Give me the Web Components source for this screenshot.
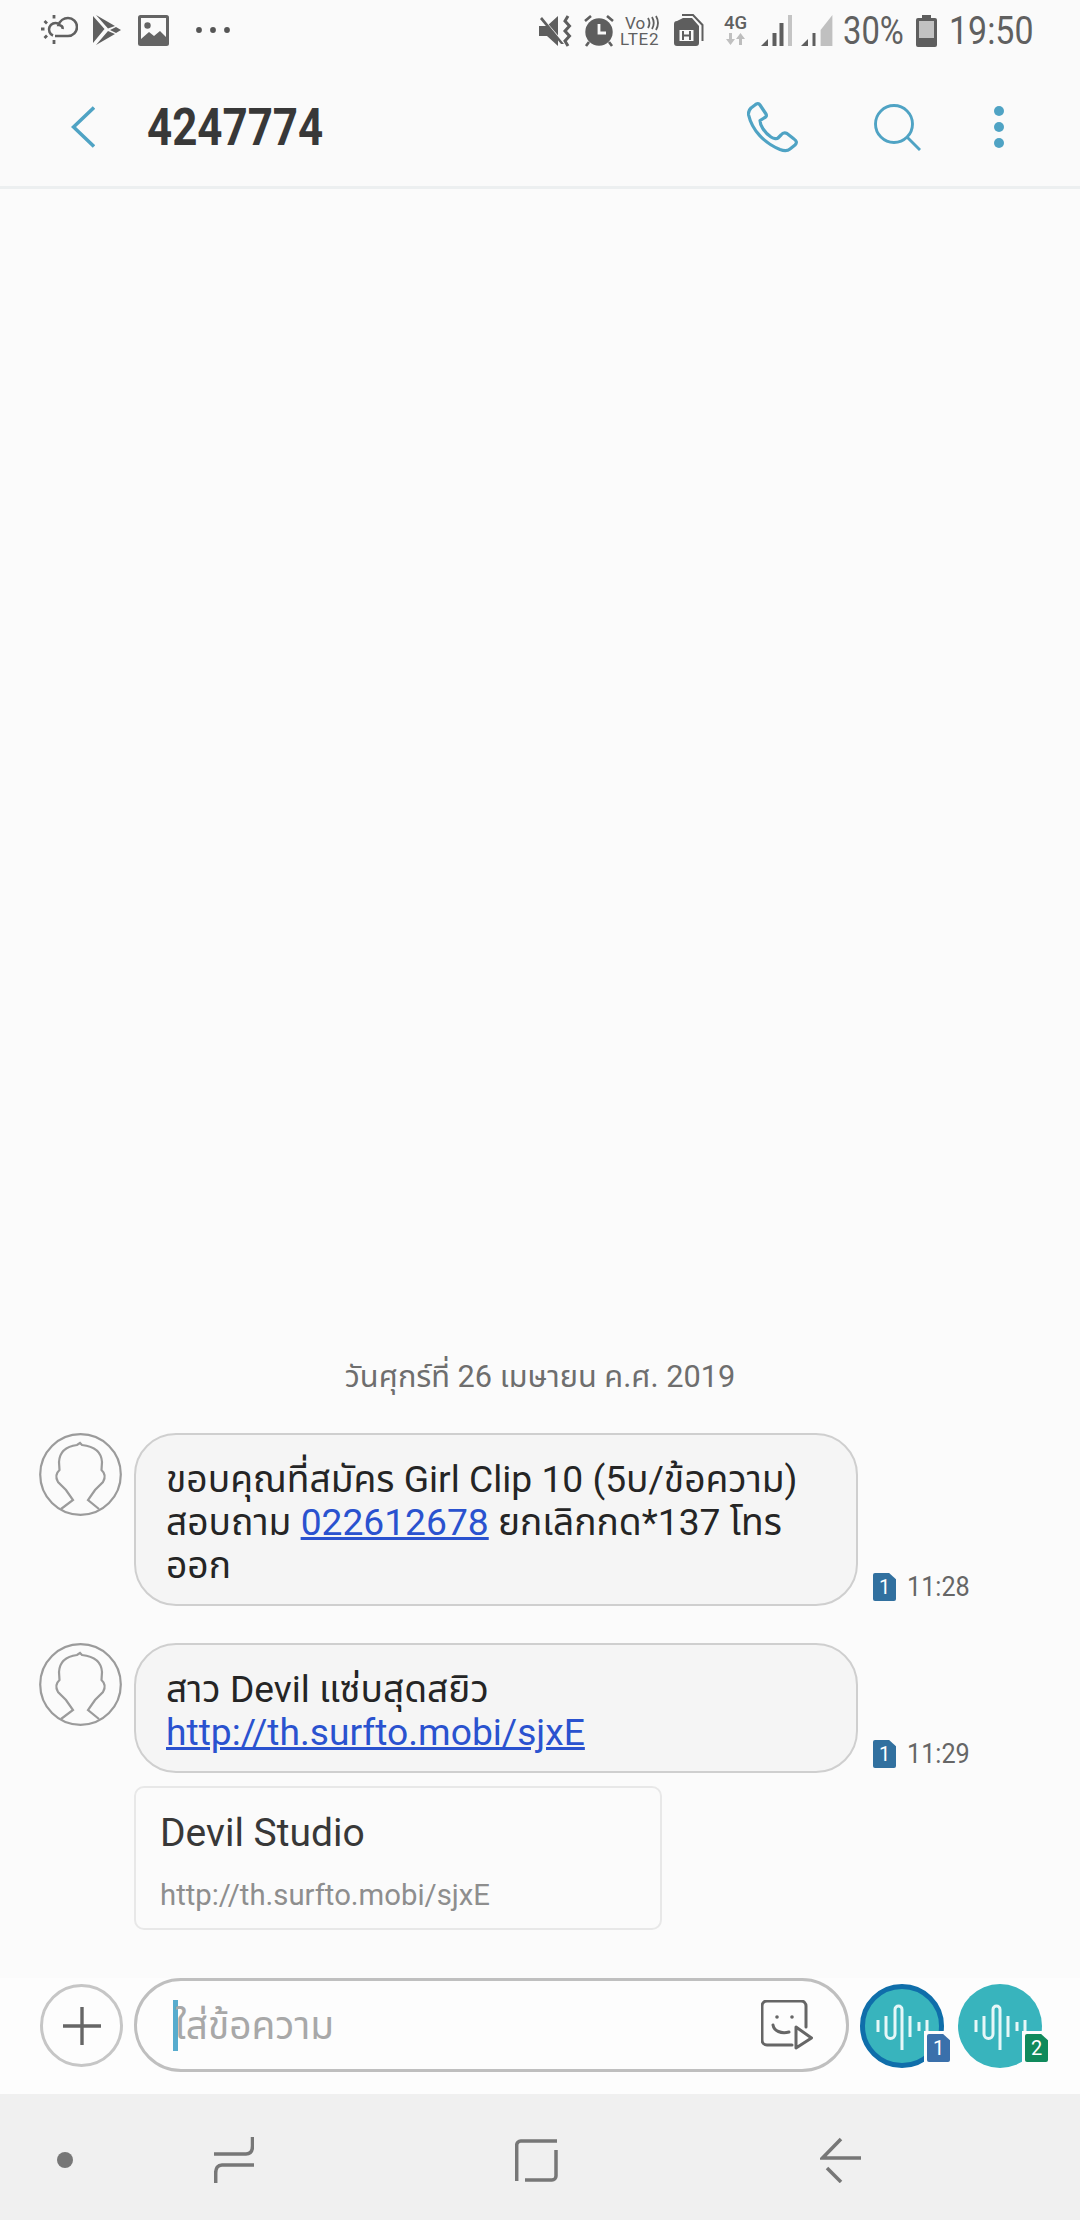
<!DOCTYPE html>
<html lang="th">
<head>
<meta charset="utf-8">
<title>4247774</title>
<style>
  html, body { margin: 0; height: 100%; }
  body {
    width: 1080px; height: 2220px;
    display: flex; flex-direction: column;
    background: #fbfbfb;
    font-family: Roboto, "Noto Sans Thai", "Noto Sans", sans-serif;
    overflow: hidden;
  }
</style>
</head>
<body>
  <status-bar></status-bar>
  <thread-header number="4247774"></thread-header>

  <message-list date="วันศุกร์ที่ 26 เมษายน ค.ศ. 2019">
    <message-row time="11:28">ขอบคุณที่สมัคร Girl Clip 10 (5บ/ข้อความ) สอบถาม <a href="#">022612678</a> ยกเลิกกด*137 โทร ออก</message-row>
    <message-row time="11:29">สาว Devil แซ่บสุดสยิว<br><a href="#">http://th.surfto.mobi/sjxE</a></message-row>
    <link-card title="Devil Studio" url="http://th.surfto.mobi/sjxE"></link-card>
  </message-list>

  <message-composer placeholder="ใส่ข้อความ"></message-composer>
  <nav-bar></nav-bar>

<script>
/* 1 ▸ status bar */
class StatusBar extends HTMLElement {
  constructor() {
    super();
    this.attachShadow({ mode: 'open' }).innerHTML = `
      <style>
        :host { display: flex; align-items: flex-start; height: 66px; padding: 15px 49px 0 41px; box-sizing: border-box; background: #fafafa; color: #606060; flex: none; }
        svg { display: block; flex: none; }
        .left, .right { display: flex; align-items: flex-start; }
        .right { margin-left: auto; }
        .txt { font-size: 39px; line-height: 32px; height: 32px; white-space: nowrap; transform: scaleX(.84); transform-origin: left center; }
        .volte { width: 42px; height: 32px; margin-left: 6px; display: flex; flex-direction: column; flex: none; }
        .vo { display: flex; align-items: center; height: 16px; padding-left: 5px; font-size: 17px; line-height: 16px; }
        .lte { height: 16px; font-size: 17px; line-height: 17px; letter-spacing: .8px; white-space: nowrap; }
        .net { width: 25px; height: 32px; margin-left: 20px; display: flex; flex-direction: column; flex: none; }
        .g4 { height: 17px; font-size: 18.5px; font-weight: 500; line-height: 17px; white-space: nowrap; }
      </style>
      <div class="left">
        <svg width="37" height="30" viewBox="0 0 37 30" fill="none" stroke="#606060" stroke-width="2.600">
          <path d="M14 21 H27 a9 9 0 0 0 0-18 a10 10 0 0 0-9.500 7 c3 0 4.500 2 4 4"/>
          <path d="M17 8.500 a6.500 6.500 0 1 0-5 12"/>
          <path d="M13 0v3.500M0 14h3.500M3.500 6l2.500 2.500M3.500 23l2.500-2.500M13 25v4" stroke-width="2.800"/>
        </svg>
        <svg style="margin-left:15px" width="28" height="30" viewBox="0 0 28 30" fill="#606060">
          <path d="M0 1 L11.500 14 L0 28Z M3 0 L22 11 L15 13.500Z M15 16 L22 19 L3 30Z M17 15 L23 12 L28 15 L23 18Z"/>
        </svg>
        <svg style="margin-left:17px" width="31" height="31" viewBox="0 0 31 31">
          <rect width="31" height="31" rx="2.500" fill="#646464"/>
          <path d="M3 3h25v19l-6-6-6 5-5-4-8 7z" fill="#fafafa"/>
          <circle cx="9.500" cy="10.500" r="3.200" fill="#646464"/>
        </svg>
        <svg style="margin-left:27px;margin-top:10px" width="34" height="10" viewBox="0 0 34 10" fill="#555">
          <circle cx="3" cy="5" r="2.900"/><circle cx="17" cy="5" r="2.900"/><circle cx="31" cy="5" r="2.900"/>
        </svg>
      </div>
      <div class="right">
        <svg width="33" height="32" viewBox="0 0 33 32" fill="#5e5e5e">
          <path d="M0 11 H8 L19 1 V31 L8 21 H0Z"/>
          <path d="M1 1 L25 29" stroke="#fafafa" stroke-width="2"/>
          <path d="M1 4 L22 29 L25 29 L3 2Z"/>
          <path d="M29 1 l-3 5 4.500 5 -4.500 5 4.500 5 -4.500 5 3 5" fill="none" stroke="#5e5e5e" stroke-width="3"/>
        </svg>
        <svg style="margin-left:12px" width="30" height="32" viewBox="0 0 30 32">
          <circle cx="15" cy="17" r="13.700" fill="#5e5e5e"/>
          <path d="M15 9v9h7" fill="none" stroke="#fafafa" stroke-width="2.800"/>
          <path d="M1 6 L7 1 M29 6 L23 1 M5 27 L2 31 M25 27 L28 31" stroke="#5e5e5e" stroke-width="2.600"/>
        </svg>
        <div class="volte">
          <div class="vo">Vo<svg style="margin-left:1px" width="13" height="16" viewBox="0 0 13 16" fill="none" stroke="#606060" stroke-width="1.800"><path d="M2 3 q3 5 0 10 M6 2 q3.500 6 0 12 M10 1 q4 7 0 14"/></svg></div>
          <div class="lte">LTE2</div>
        </div>
        <svg style="margin-left:12px;margin-top:-1px" width="30" height="33" viewBox="0 0 30 33">
          <path d="M3 7 L9 4 H18 L25 12 V29 a3 3 0 0 1-3 3 H3 a3 3 0 0 1-3-3 V10 a3 3 0 0 1 3-3Z" fill="#5e5e5e"/>
          <path d="M8 1 H19 L28.500 11 V27" fill="none" stroke="#5e5e5e" stroke-width="2"/>
          <rect x="5.500" y="16" width="14" height="11" fill="#fafafa"/>
          <path d="M9 17v9M16 17v9M9 21.500h7" stroke="#5e5e5e" stroke-width="2"/>
        </svg>
        <div class="net">
          <div class="g4">4G</div>
          <svg width="25" height="13" viewBox="0 0 25 13">
            <path d="M5 1h3v6h3l-4.500 6-4.500-6h3z" fill="#c0c0c0"/>
            <path d="M15 13h3v-6h3l-4.500-6-4.500 6h3z" fill="#bdbdbd"/>
          </svg>
        </div>
        <svg style="margin-left:12px" width="32" height="32" viewBox="0 0 32 32">
          <path d="M0 31 L7 24 V31Z" fill="#5e5e5e"/>
          <rect x="11.500" y="18" width="4" height="13" fill="#5e5e5e"/>
          <rect x="18.500" y="8" width="4" height="23" fill="#5e5e5e"/>
          <rect x="27" y="0" width="4" height="31" fill="#c4c4c4"/>
        </svg>
        <svg style="margin-left:8px" width="32" height="32" viewBox="0 0 32 32">
          <path d="M0 31 L7 24 V31Z" fill="#5e5e5e"/>
          <rect x="11.500" y="18" width="3" height="13" fill="#5e5e5e"/>
          <path d="M19.600 15 L31.400 0 V31 H19.600Z" fill="#c0c0c0"/>
        </svg>
        <div class="txt" style="width:60px;margin-left:10px">30%</div>
        <svg style="margin-left:13px" width="21" height="32" viewBox="0 0 21 32">
          <path d="M6 0h9v3h4a2 2 0 0 1 2 2v25a2 2 0 0 1-2 2H2a2 2 0 0 1-2-2V5a2 2 0 0 1 2-2h4z" fill="#5e5e5e"/>
          <rect x="3" y="6" width="15" height="17" fill="#c2c2c2"/>
        </svg>
        <div class="txt" style="width:82px;margin-left:12px;transform:scaleX(.87)">19:50</div>
      </div>`;
  }
}

/* 2 ▸ header */
class ThreadHeader extends HTMLElement {
  constructor() {
    super();
    this.attachShadow({ mode: 'open' }).innerHTML = `
      <style>
        :host { display: flex; align-items: center; height: 118px; padding: 2px 76px 0 71px; background: #fafafa; border-bottom: 3px solid #eceff0; flex: none; }
        svg { display: block; flex: none; }
        .num { margin-left: 52px; width: 172px; font-size: 51px; font-weight: 700; color: #383838; transform: scaleX(.86); transform-origin: left center; white-space: nowrap; }
        .acts { margin-left: auto; display: flex; align-items: center; }
      </style>
      <svg width="24" height="42" viewBox="0 0 24 42" fill="none" stroke="#4fa3c4" stroke-width="3.600"><path d="M23 1.500 L2.500 21 L23 40.500"/></svg>
      <div class="num"></div>
      <div class="acts">
        <svg width="52" height="51" viewBox="0 0 52 51" fill="none" stroke="#4fa3c4" stroke-width="3.200" stroke-linejoin="round">
          <path d="M1.600 13 C1 10 2 8 4 6 L8 3 C10 1 12 1.500 13 3 L19 12 C20 14 19 15 17 16 L13 18.500 C13 23 17 30 24 35 C27 37 30 37 31 36 L34 33 C36 30.500 38 30.500 40 31.500 L47 37 C50 39 50 41 48 43 L43 47 C40 49.500 37 49 33 47.500 C17 41 5 28 1.600 13Z"/>
        </svg>
        <svg style="margin-left:75px" width="47" height="47" viewBox="0 0 47 47" fill="none" stroke="#4fa3c4" stroke-width="2.900">
          <circle cx="20" cy="20" r="18.500"/><path d="M33 33 L46 46"/>
        </svg>
        <svg style="margin-left:73px" width="10" height="42" viewBox="0 0 10 42" fill="#4fa3c4">
          <circle cx="5" cy="5" r="5"/><circle cx="5" cy="21" r="5"/><circle cx="5" cy="37" r="5"/>
        </svg>
      </div>`;
    this.shadowRoot.querySelector('.num').textContent = this.getAttribute('number');
  }
}

/* 3 ▸ messages */
class MessageList extends HTMLElement {
  constructor() {
    super();
    this.attachShadow({ mode: 'open' }).innerHTML = `
      <style>
        :host { flex: 1; display: flex; flex-direction: column; justify-content: flex-end; padding: 0 0 48px 39px; min-height: 0; }
        .date { text-align: center; margin: 0 0 36px -39px; font-size: 30.7px; line-height: 40px; color: #6e6e6e; white-space: nowrap; }
      </style>
      <div class="date"></div>
      <slot></slot>`;
    this.shadowRoot.querySelector('.date').textContent = this.getAttribute('date');
  }
}

class MessageRow extends HTMLElement {
  constructor() {
    super();
    this.attachShadow({ mode: 'open' }).innerHTML = `
      <style>
        :host { display: flex; align-items: flex-start; margin-bottom: 37px; }
        :host(:nth-of-type(2)) { margin-bottom: 13px; }
        svg { display: block; flex: none; }
        .bubble { margin-left: 12px; width: 724px; box-sizing: border-box; padding: 23px 20px 17px 30px; background: #f5f5f5; border: 2px solid #cfcfcf; border-radius: 42px; font-size: 37.2px; line-height: 43px; color: #252525; }
        ::slotted(a) { color: #2a52cf; text-decoration: underline; }
        .meta { align-self: flex-end; display: flex; align-items: center; margin: 0 0 5px 15px; }
        .time { margin-left: 11px; font-size: 28px; line-height: 28px; color: #666; transform: scaleX(.9); transform-origin: left center; }
      </style>
      <svg width="83" height="83" viewBox="0 0 83 83" fill="none" stroke="#9b9b9b" stroke-width="2.200">
        <circle cx="41.500" cy="41.500" r="40.300"/>
        <path d="M22 76 L34 67 L27 57 L19 49 Q15 42 20.500 37 L20 29 Q21 14 38 12 L41 10 L43 12 Q62 14 63 29 L62.500 37 Q68 42 64 49 L56 57 L49 67 L60 76"/>
      </svg>
      <div class="bubble"><slot></slot></div>
      <div class="meta"><sim-chip n="1" color="#31709f"></sim-chip><span class="time"></span></div>`;
    this.shadowRoot.querySelector('.time').textContent = this.getAttribute('time');
  }
}

class SimChip extends HTMLElement {
  constructor() {
    super();
    this.attachShadow({ mode: 'open' }).innerHTML = `
      <style>
        :host { display: block; flex: none; width: 23px; height: 28px; }
        div { width: 100%; height: 100%; display: flex; align-items: center; justify-content: center; color: #fff; font-size: 20px; clip-path: polygon(0 0, 70% 0, 100% 22%, 100% 100%, 0 100%); border-radius: 2px; }
      </style>
      <div></div>`;
    const d = this.shadowRoot.querySelector('div');
    d.textContent = this.getAttribute('n');
    d.style.background = this.getAttribute('color');
  }
}

class LinkCard extends HTMLElement {
  constructor() {
    super();
    this.attachShadow({ mode: 'open' }).innerHTML = `
      <style>
        :host { display: block; width: 528px; height: 144px; margin-left: 95px; box-sizing: border-box; padding: 23px 24px 0; background: #fbfbfb; border: 2px solid #e8e8e8; border-radius: 10px; }
        .t { font-size: 39px; line-height: 44px; color: #383838; white-space: nowrap; }
        .u { margin-top: 23px; font-size: 29.3px; line-height: 34px; color: #8e8e8e; white-space: nowrap; }
      </style>
      <div class="t"></div><div class="u"></div>`;
    this.shadowRoot.querySelector('.t').textContent = this.getAttribute('title');
    this.shadowRoot.querySelector('.u').textContent = this.getAttribute('url');
  }
}

/* 4 ▸ composer */
class VoiceButton extends HTMLElement {
  constructor() {
    super();
    const ring = this.hasAttribute('ring');
    this.attachShadow({ mode: 'open' }).innerHTML = `
      <style>
        :host { display: block; position: relative; flex: none; width: 84px; height: 84px; }
        .disc { width: 84px; height: 84px; box-sizing: border-box; border-radius: 50%; background: #38b4bd; ${ring ? 'border: 5px solid #0f6eaa;' : ''} position: relative; }
        svg { position: absolute; left: ${ring ? -5 : 0}px; top: ${ring ? -5 : 0}px; }
        .tag { position: absolute; left: 64px; top: 47px; padding: 3px; background: #fdfdfd; clip-path: polygon(0 0, 72% 0, 100% 24%, 100% 100%, 0 100%); }
      </style>
      <div class="disc">
        <svg width="84" height="84" viewBox="0 0 84 84" fill="none" stroke="#e6f7f8" stroke-width="3">
          <path d="M18 36 V48 M26 32 V50 a4.500 4.500 0 0 0 9 0 V25.500 a3.500 3.500 0 0 1 7 0 V66 M50 32 V53 M59 38 V47 M67 36 V48"/>
        </svg>
      </div>
      <div class="tag"><sim-chip n="${this.getAttribute('n')}" color="${this.getAttribute('color')}"></sim-chip></div>`;
  }
}

class MessageComposer extends HTMLElement {
  constructor() {
    super();
    this.attachShadow({ mode: 'open' }).innerHTML = `
      <style>
        :host { display: flex; align-items: flex-start; height: 116px; box-sizing: border-box; padding: 0 0 0 40px; background: #fdfdfd; flex: none; }
        svg { display: block; flex: none; }
        .plus { margin-top: 6px; width: 83px; height: 83px; box-sizing: border-box; border: 3px solid #c6c6c6; border-radius: 50%; display: flex; align-items: center; justify-content: center; flex: none; }
        .input { margin-left: 11px; width: 715px; height: 94px; box-sizing: border-box; border: 3px solid #bfbfbf; border-radius: 47px; display: flex; align-items: center; padding: 0 33px 0 36px; flex: none; }
        .caret { width: 5px; height: 51px; background: #57acce; flex: none; }
        .ph { margin-left: -3px; padding-top: 4px; font-size: 38.8px; color: #a8a8a8; white-space: nowrap; }
        .input svg { margin-left: auto; }
        .voice { display: flex; margin: 6px 0 0 11px; gap: 14px; }
      </style>
      <div class="plus">
        <svg width="38" height="38" viewBox="0 0 38 38" stroke="#666" stroke-width="3.400"><path d="M19 0V38M0 19H38"/></svg>
      </div>
      <div class="input">
        <span class="caret"></span><span class="ph"></span>
        <svg width="52" height="50" viewBox="0 0 52 50" fill="none" stroke="#666" stroke-width="3" stroke-linecap="round">
          <path d="M31 45 H6 a5 5 0 0 1-5-5 V6 a5 5 0 0 1 5-5 H40 a5 5 0 0 1 5 5 V27"/>
          <path d="M12 25 c1 6 8 9 16 7"/>
          <path d="M35 27 L50.500 38 L35 48Z" stroke-linejoin="round"/>
          <circle cx="16" cy="17" r="1.800" fill="#666" stroke="none"/><circle cx="31" cy="17" r="1.800" fill="#666" stroke="none"/>
        </svg>
      </div>
      <div class="voice">
        <voice-button ring n="1" color="#3a70ab"></voice-button>
        <voice-button n="2" color="#108a5c"></voice-button>
      </div>`;
    this.shadowRoot.querySelector('.ph').textContent = this.getAttribute('placeholder');
  }
}

/* 5 ▸ nav bar */
class NavBar extends HTMLElement {
  constructor() {
    super();
    this.attachShadow({ mode: 'open' }).innerHTML = `
      <style>
        :host { display: flex; align-items: center; height: 126px; box-sizing: border-box; padding: 6px 0 0 57px; background: #f0f0f0; flex: none; }
        svg { display: block; flex: none; }
      </style>
      <svg width="16" height="16" viewBox="0 0 16 16"><circle cx="8" cy="8" r="8" fill="#777"/></svg>
      <svg style="margin-left:141px" width="40" height="46" viewBox="0 0 40 46" fill="none" stroke="#777" stroke-width="3.500">
        <path d="M0 17 H32 Q38.500 17 38.500 9 V0"/><path d="M40 28 H8 Q1.700 28 1.700 36 V46"/>
      </svg>
      <svg style="margin-left:261px" width="43" height="43" viewBox="0 0 43 43" fill="none" stroke="#777" stroke-width="3.500">
        <path d="M1.700 42 V6 a4 4 0 0 1 4-4 H42"/><path d="M41 11 V37 a4 4 0 0 1-4 4 H10"/>
      </svg>
      <svg style="margin-left:262px" width="42" height="46" viewBox="0 0 42 46" fill="none" stroke="#777" stroke-width="3.500">
        <path d="M21 2 L2.500 21 H41"/><path d="M7 31 L21 45"/>
      </svg>`;
  }
}

/* 6 ▸ register */
customElements.define('status-bar', StatusBar);
customElements.define('thread-header', ThreadHeader);
customElements.define('sim-chip', SimChip);
customElements.define('message-list', MessageList);
customElements.define('message-row', MessageRow);
customElements.define('link-card', LinkCard);
customElements.define('voice-button', VoiceButton);
customElements.define('message-composer', MessageComposer);
customElements.define('nav-bar', NavBar);
</script>
</body>
</html>
